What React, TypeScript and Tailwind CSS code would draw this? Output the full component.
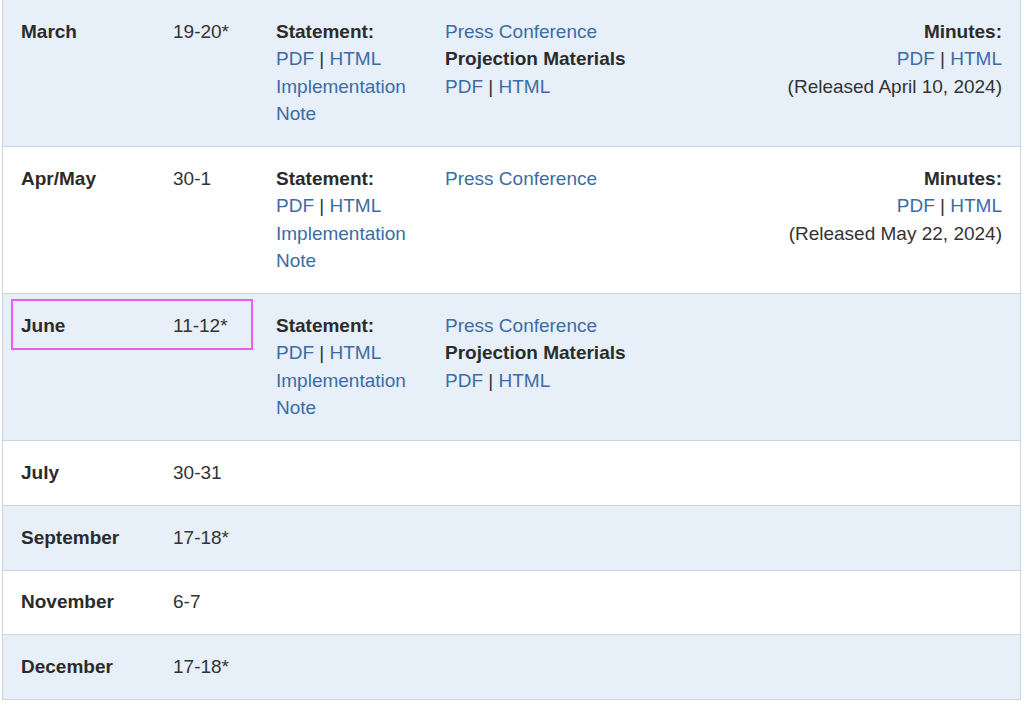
import React from 'react';

type Meeting = {
  month: string;
  days: string;
  statement?: boolean;
  press?: boolean;
  projection?: boolean;
  minutes?: string;
  highlight?: boolean;
};

const meetings: Meeting[] = [
  { month: 'March', days: '19-20*', statement: true, press: true, projection: true, minutes: 'April 10, 2024' },
  { month: 'Apr/May', days: '30-1', statement: true, press: true, minutes: 'May 22, 2024' },
  { month: 'June', days: '11-12*', statement: true, press: true, projection: true, highlight: true },
  { month: 'July', days: '30-31' },
  { month: 'September', days: '17-18*' },
  { month: 'November', days: '6-7' },
  { month: 'December', days: '17-18*' },
];

const Link: React.FC<{ children: React.ReactNode }> = ({ children }) => (
  <a href="#" className="text-[#3c6ca4] hover:underline">
    {children}
  </a>
);

const PdfHtml = () => (
  <div>
    <Link>PDF</Link> | <Link>HTML</Link>
  </div>
);

export default function App() {
  return (
    <div className="min-h-screen bg-white font-['Liberation_Sans',Arial,sans-serif] text-[19px] leading-[27.45px] text-[#333]">
      <div className="ml-[2px] w-[1019px] border-x border-[#cbd5e1]">
        {meetings.map((m, i) => (
          <div
            key={m.month}
            className={`relative flex border-b border-[#cbd5e1] px-[18px] pt-[17.6px] pb-[18.7px] ${i % 2 === 0 ? 'bg-[#e7eff8]' : 'bg-white'}`}
          >
            {m.highlight && (
              <div className="pointer-events-none absolute left-[8px] top-[5px] h-[51px] w-[242px] border-2 border-[#ef5cf0]" />
            )}
            <div className="w-[152px] font-bold text-[#2b2b2b]">{m.month}</div>
            <div className="w-[103px]">{m.days}</div>
            <div className="w-[169px]">
              {m.statement && (
                <>
                  <div className="font-bold text-[#2b2b2b]">Statement:</div>
                  <PdfHtml />
                  <div>
                    <Link>Implementation</Link>
                  </div>
                  <div>
                    <Link>Note</Link>
                  </div>
                </>
              )}
            </div>
            <div className="flex-1">
              {m.press && (
                <div>
                  <Link>Press Conference</Link>
                </div>
              )}
              {m.projection && (
                <>
                  <div className="font-bold text-[#2b2b2b]">Projection Materials</div>
                  <PdfHtml />
                </>
              )}
            </div>
            {m.minutes && (
              <div className="text-right">
                <div className="font-bold text-[#2b2b2b]">Minutes:</div>
                <PdfHtml />
                <div>(Released {m.minutes})</div>
              </div>
            )}
          </div>
        ))}
      </div>
    </div>
  );
}
